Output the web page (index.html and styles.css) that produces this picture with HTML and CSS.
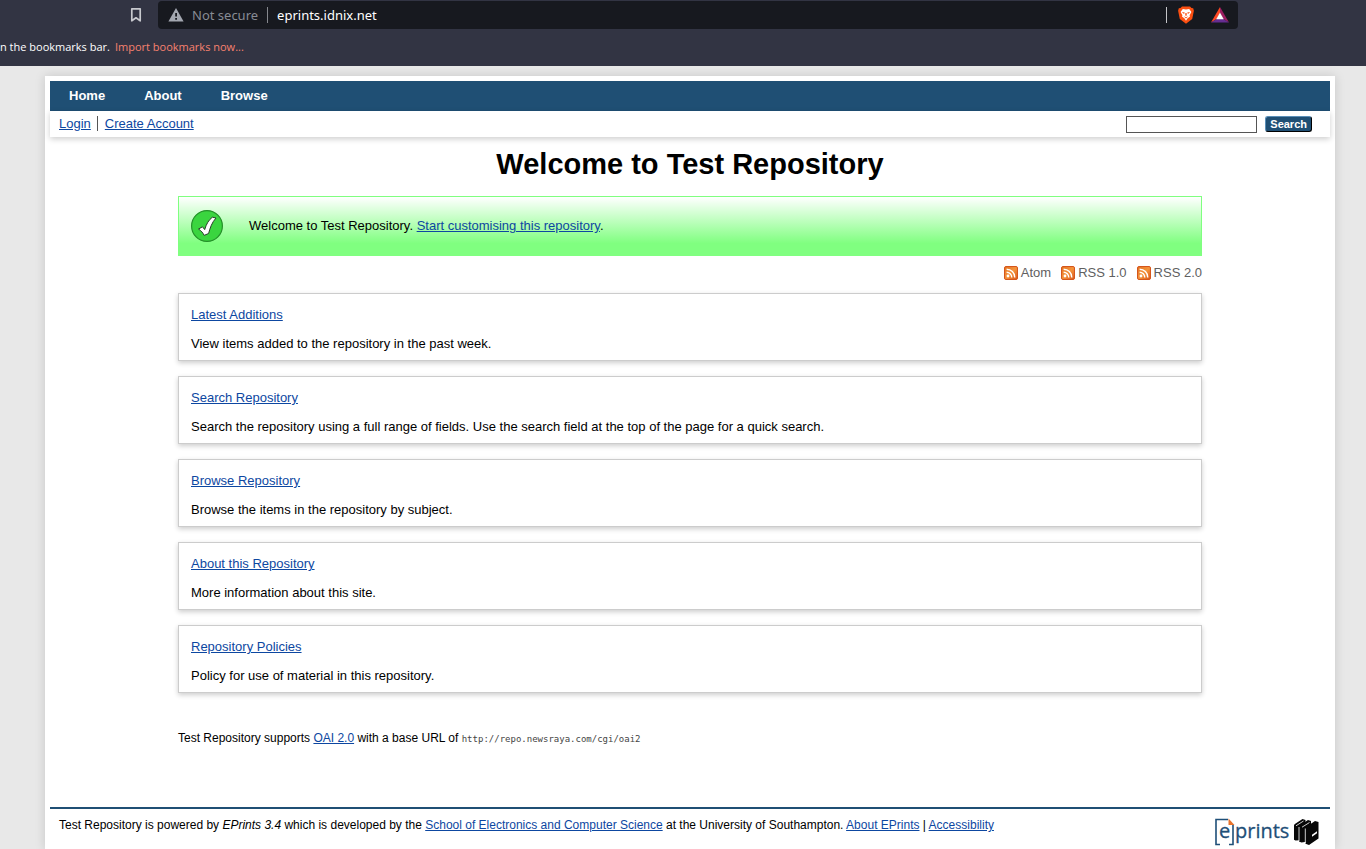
FILE: index.html
```html
<!DOCTYPE html>
<html lang="en">
<head>
<meta charset="utf-8">
<title>Welcome to Test Repository</title>
<link rel="stylesheet" href="styles.css">
</head>
<body>
<svg class="defs" width="0" height="0" aria-hidden="true">
  <defs>
    <linearGradient id="feed-bg" x1="0" y1="0" x2="1" y2="1"><stop offset="0" stop-color="#e2701f"/><stop offset=".5" stop-color="#f5943c"/><stop offset="1" stop-color="#d9561b"/></linearGradient>
    <symbol id="feed" viewBox="0 0 14 14">
      <rect x=".5" y=".5" width="13" height="13" rx="1.5" fill="url(#feed-bg)" stroke="#d5561c"/>
      <circle cx="4" cy="10" r="1.4" fill="#fff"/>
      <path d="M2.6 6.2a5.2 5.2 0 0 1 5.2 5.2M2.6 3.2a8.2 8.2 0 0 1 8.2 8.2" fill="none" stroke="#fff" stroke-width="1.4"/>
    </symbol>
  </defs>
</svg>
<header class="browser">
  <div class="toolbar">
    <button class="bookmark" type="button" aria-label="Bookmark">
      <svg width="12" height="16" viewBox="0 0 12 16"><path d="M1.8 1.8h8.4v12L6 10.8l-4.2 3z" fill="none" stroke="#c8c9ce" stroke-width="1.7" stroke-linejoin="round"/></svg>
    </button>
    <div class="address">
      <svg width="16" height="14" viewBox="0 0 16 14"><path d="M8 0l7.6 13.4H.4z" fill="#a3a7b0"/><path d="M7.2 5h1.8v3.6H7.2zM7.2 10h1.8v1.8H7.2z" fill="#17191f"/></svg>
      <span class="security">Not secure</span>
      <span class="divider"></span>
      <span class="url">eprints.idnix.net</span>
      <span class="divider push"></span>
      <svg class="shield" width="16" height="18" viewBox="0 0 16 18"><path d="M4 .4h8l1.500 1.500 1.700.3.700 2.500-1.700 8.200L8 17.800l-6.200-4.900L.1 4.700l.7-2.500 1.700-.3z" fill="#fb4f11"/><path d="M4.800 3L8 3.600 11.200 3l2.200 3-1.800 3.200.4 1.300-2.600 2L8 14.800l-1.400-2.300-2.600-2 .4-1.300L2.600 6z" fill="#fff"/><path d="M3.800 5.900l3 .6-.8 1.400zM12.200 5.900l-3 .6.800 1.400zM7.400 7h1.200l.2 2.200L8 10l-.8-.8zM5.700 10.300L8 11.200l2.300-.9L8 12.400z" fill="#fb4f11"/></svg>
      <svg class="rewards" width="18" height="16" viewBox="0 0 18 16"><path d="M9 0v6L5.600 12 0 15.600z" fill="#ff4724"/><path d="M9 0l9 15.600L12.400 12 9 6z" fill="#9e1f63"/><path d="M0 15.600L5.600 12h6.800l5.600 3.600z" fill="#662d91"/><path d="M9 5.600l3.800 6.600H5.200z" fill="#fff"/></svg>
    </div>
  </div>
  <div class="bookmarks"><span>n the bookmarks bar.</span><a href="#">Import bookmarks now...</a></div>
</header>
<div class="page">
  <nav class="menu"><a href="#">Home</a><a href="#">About</a><a href="#">Browse</a></nav>
  <div class="tools">
    <ul class="account"><li><a href="#">Login</a></li><li><a href="#">Create Account</a></li></ul>
    <form class="search"><input type="text" aria-label="Search"><button type="button">Search</button></form>
  </div>
  <main class="content">
    <h1>Welcome to Test Repository</h1>
    <div class="message">
      <svg width="32" height="32" viewBox="0 0 32 32"><circle cx="16" cy="16" r="15.400" fill="#3ad53f" stroke="#249029" stroke-width="1.200"/><path d="M7.500 19l4-2.200 2.200 2.800C15.200 14.200 18 9.500 21.400 7.200l3.600.8c-4.200 4.600-5.800 9.600-7.400 15.500l-4.500 1.900c-1-2.600-3-4.600-5.600-6.400z" fill="#fff" stroke="#273f28" stroke-width="1" stroke-linejoin="round"/></svg>
      <p>Welcome to Test Repository. <a href="#">Start customising this repository</a>.</p>
    </div>
    <div class="feeds">
      <a href="#"><svg width="14" height="14"><use href="#feed"/></svg>Atom</a>
      <a href="#"><svg width="14" height="14"><use href="#feed"/></svg>RSS 1.0</a>
      <a href="#"><svg width="14" height="14"><use href="#feed"/></svg>RSS 2.0</a>
    </div>
    <div class="cards">
      <section class="card"><a href="#">Latest Additions</a><p>View items added to the repository in the past week.</p></section>
      <section class="card"><a href="#">Search Repository</a><p>Search the repository using a full range of fields. Use the search field at the top of the page for a quick search.</p></section>
      <section class="card"><a href="#">Browse Repository</a><p>Browse the items in the repository by subject.</p></section>
      <section class="card"><a href="#">About this Repository</a><p>More information about this site.</p></section>
      <section class="card"><a href="#">Repository Policies</a><p>Policy for use of material in this repository.</p></section>
    </div>
    <p class="oai">Test Repository supports <a href="#">OAI 2.0</a> with a base URL of <code>http://repo.newsraya.com/cgi/oai2</code></p>
  </main>
  <footer class="footer">
    <p>Test Repository is powered by <em>EPrints 3.4</em> which is developed by the <a href="#">School of Electronics and Computer Science</a> at the University of Southampton. <a href="#">About EPrints</a> | <a href="#">Accessibility</a></p>
    <a class="logo" href="#" aria-label="EPrints">
      <svg width="105" height="30" viewBox="0 0 105 30">
        <path d="M5 2.500H1v25h4M13 2.500H5M14 27.500h4V8" fill="none" stroke="#1f4f78" stroke-width="1.600"/>
        <path d="M13.500 1.500l6 6.500h-6z" fill="#e8732c"/>
        <text x="4" y="21">e</text><text x="20" y="21">prints</text>
        <path d="M79 8.500c0-1 1-1.800 2-2.300L87.500 2l3 1-1 20-9 .5-1.500-.8z" fill="#080808"/>
        <path d="M84 10c0-1.200 1-2 2-2.500L93 3l3 1v20l-9.500 1.500-2.500-1z" fill="#080808"/>
        <path d="M90.500 11.500c0-1.300 1-2 2-2.600L100 4l3.500 1v16.500L94 28l-3.500-1.200z" fill="#080808"/>
        <path d="M81 8.800L88.500 4M87 10.200L94.500 5.500M84 10v14M90.300 11.500V26" fill="none" stroke="#fff" stroke-width=".8"/>
        <path d="M97 17.800l5-3.500v2l-5 3.500z" fill="#fff"/>
      </svg>
    </a>
  </footer>
</div>
</body>
</html>
```
FILE: styles.css
```css
* { box-sizing: border-box; }
body {
  display: flex;
  flex-direction: column;
  min-height: 100vh;
  margin: 0;
  background: #e8e8e8;
  color: #000;
  font: 13px/16px "Liberation Sans", Arial, sans-serif;
}
p, h1, ul { margin: 0; padding: 0; }
a { color: #0d47a1; }
.defs { position: absolute; }

/* Browser bar */
.browser {
  height: 66px;
  background: #323443;
  font-family: "Noto Sans", sans-serif;
  color: #fff;
}
.toolbar { display: flex; height: 29px; padding: 1px 128px 0 130px; }
.bookmark {
  display: flex;
  align-items: center;
  width: 28px;
  padding: 0;
  border: 0;
  background: none;
}
.address {
  flex: 1;
  display: flex;
  align-items: center;
  padding: 0 9px 0 10px;
  border-radius: 4px;
  background: #17191f;
  font-size: 13px;
}
.security { margin: 0 9px 0 8px; color: #878b94; }
.divider { width: 1px; height: 16px; background: #85878d; }
.divider.push { margin-left: auto; background: #c4c5c8; }
.url { margin-left: 9px; }
.shield { margin: 0 17px 0 11px; }
.bookmarks {
  display: flex;
  gap: 5px;
  margin-top: 9px;
  font: 11px/18px "Open Sans", sans-serif;
  white-space: nowrap;
}
.bookmarks a { color: #f7816f; text-decoration: none; }

/* Page frame */
.page {
  flex: 1;
  margin: 10px 31px 0 45px;
  padding: 5px 5px 0;
  background: #fff;
  box-shadow: 0 0 10px rgba(0, 0, 0, .15);
}
.menu {
  display: flex;
  gap: 39px;
  padding: 0 19px;
  background: #1f4f74;
  line-height: 30px;
}
.menu a { color: #fff; font-weight: bold; text-decoration: none; }
.tools {
  display: flex;
  justify-content: space-between;
  height: 26px;
  padding: 5px 18px 0 9px;
  box-shadow: 0 2px 6px rgba(0, 0, 0, .2);
}
.account { display: flex; list-style: none; line-height: 15px; }
.account li + li { margin-left: 6px; padding-left: 7px; border-left: 1px solid #555; height: 15px; }
.search { display: flex; gap: 8px; align-items: flex-start; }
.search input { width: 131px; height: 17px; padding: 0 2px; border: 1px solid #555; }
.search button {
  height: 16px;
  padding: 0 4px;
  border: 1px solid;
  border-color: #5a8fb8 #000 #000 #5a8fb8;
  border-radius: 3px;
  background: #1f4f74;
  color: #fff;
  font: bold 11px/14px "Liberation Sans", Arial, sans-serif;
}

/* Main column */
.content { width: 80%; margin: 0 auto; }
h1 { padding: 9px 0 14px; font-size: 29px; line-height: 36px; text-align: center; }
.message {
  display: flex;
  align-items: center;
  gap: 26px;
  height: 60px;
  padding: 0 12px;
  border: 1px solid #80ff80;
  background: linear-gradient(#fff, #80ff80 80%);
}
.feeds { display: flex; justify-content: flex-end; gap: 10px; padding: 9px 0 12px; }
.feeds a { display: flex; align-items: center; gap: 3px; color: #606060; text-decoration: none; }
.cards { display: grid; gap: 15px; }
.card {
  padding: 13px 12px 8px;
  border: 1px solid #ccc;
  box-shadow: 0 2px 5px rgba(0, 0, 0, .2);
}
.card p { margin-top: 13px; }
.oai { margin-top: 37px; font-size: 12px; }
.oai code { color: #444; font: 9px "DejaVu Sans Mono", monospace; }

/* Footer */
.footer {
  display: flex;
  justify-content: space-between;
  align-items: flex-start;
  margin-top: 61px;
  padding: 8px 10px 0 9px;
  border-top: 2px solid #1f4f74;
  font-size: 12px;
}
.logo { display: block; line-height: 0; }
.logo svg { overflow: visible; }
.logo text { fill: #1f4f78; stroke: #1f4f78; stroke-width: .3; font: 20px "Open Sans", sans-serif; }
```
